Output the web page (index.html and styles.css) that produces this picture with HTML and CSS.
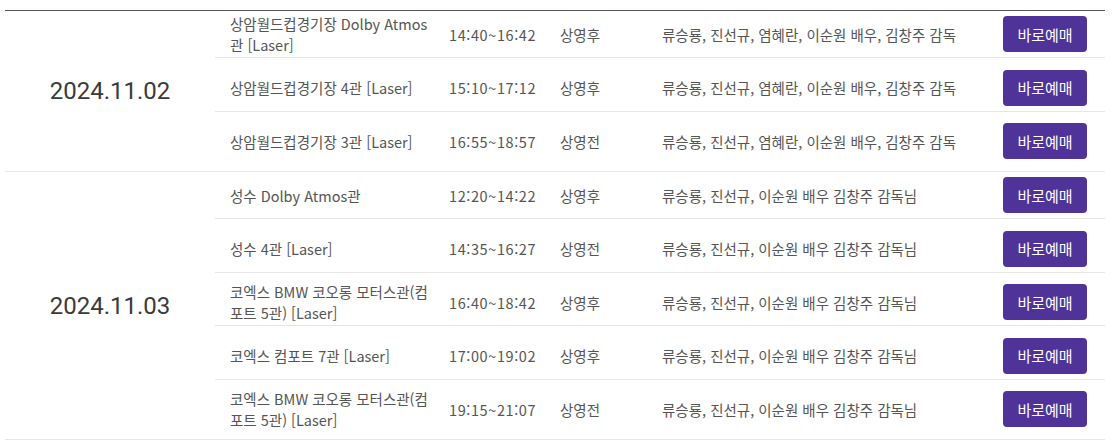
FILE: index.html
```html
<!DOCTYPE html>
<html lang="ko">
<head>
<meta charset="utf-8">
<title>상영 일정</title>
<link rel="stylesheet" href="styles.css">
</head>
<body>
<div class="schedule">
  <div class="group">
    <div class="date">2024.11.02</div>
    <div class="rows">
      <div class="row">
        <div class="venue">상암월드컵경기장 Dolby Atmos관 [Laser]</div>
        <div class="time">14:40~16:42</div>
        <div class="status">상영후</div>
        <div class="cast">류승룡, 진선규, 염혜란, 이순원 배우, 김창주 감독</div>
        <div class="action"><button class="book">바로예매</button></div>
      </div>
      <div class="row">
        <div class="venue">상암월드컵경기장 4관 [Laser]</div>
        <div class="time">15:10~17:12</div>
        <div class="status">상영후</div>
        <div class="cast">류승룡, 진선규, 염혜란, 이순원 배우, 김창주 감독</div>
        <div class="action"><button class="book">바로예매</button></div>
      </div>
      <div class="row">
        <div class="venue">상암월드컵경기장 3관 [Laser]</div>
        <div class="time">16:55~18:57</div>
        <div class="status">상영전</div>
        <div class="cast">류승룡, 진선규, 염혜란, 이순원 배우, 김창주 감독</div>
        <div class="action"><button class="book">바로예매</button></div>
      </div>
    </div>
  </div>
  <div class="group">
    <div class="date">2024.11.03</div>
    <div class="rows">
      <div class="row">
        <div class="venue">성수 Dolby Atmos관</div>
        <div class="time">12:20~14:22</div>
        <div class="status">상영후</div>
        <div class="cast">류승룡, 진선규, 이순원 배우 김창주 감독님</div>
        <div class="action"><button class="book">바로예매</button></div>
      </div>
      <div class="row">
        <div class="venue">성수 4관 [Laser]</div>
        <div class="time">14:35~16:27</div>
        <div class="status">상영전</div>
        <div class="cast">류승룡, 진선규, 이순원 배우 김창주 감독님</div>
        <div class="action"><button class="book">바로예매</button></div>
      </div>
      <div class="row">
        <div class="venue">코엑스 BMW 코오롱 모터스관(컴포트 5관) [Laser]</div>
        <div class="time">16:40~18:42</div>
        <div class="status">상영후</div>
        <div class="cast">류승룡, 진선규, 이순원 배우 김창주 감독님</div>
        <div class="action"><button class="book">바로예매</button></div>
      </div>
      <div class="row">
        <div class="venue">코엑스 컴포트 7관 [Laser]</div>
        <div class="time">17:00~19:02</div>
        <div class="status">상영후</div>
        <div class="cast">류승룡, 진선규, 이순원 배우 김창주 감독님</div>
        <div class="action"><button class="book">바로예매</button></div>
      </div>
      <div class="row">
        <div class="venue">코엑스 BMW 코오롱 모터스관(컴포트 5관) [Laser]</div>
        <div class="time">19:15~21:07</div>
        <div class="status">상영전</div>
        <div class="cast">류승룡, 진선규, 이순원 배우 김창주 감독님</div>
        <div class="action"><button class="book">바로예매</button></div>
      </div>
    </div>
  </div>
</div>
</body>
</html>
```
FILE: styles.css
```css
html, body {
  margin: 0;
  padding: 0;
  background: #fff;
}
body {
  font-family: "Noto Sans CJK KR", "Noto Sans", sans-serif;
  color: #555;
}
.schedule {
  margin: 10px 0 0 5px;
  width: 1100px;
  border-top: 1px solid #555;
}
.group {
  display: flex;
  border-bottom: 1px solid #e6e6e6;
  padding-bottom: 7px;
}
.date {
  width: 210px;
  flex: none;
  display: flex;
  align-items: center;
  justify-content: center;
  font-family: Roboto, "Noto Sans", sans-serif;
  font-size: 24px;
  color: #3a3a3a;
  padding-top: 7px;
}
.rows {
  flex: 1;
  display: flex;
  flex-direction: column;
  gap: 6.5px;
}
.row {
  display: grid;
  grid-template-columns: 219px 111px 102px 1fr 84px;
  align-items: center;
  height: 46px;
  padding: 0 18px 0 15px;
  border-bottom: 1px solid #e6e6e6;
  font-size: 14.5px;
  line-height: 21px;
}
.row:last-child {
  border-bottom: none;
}
.venue {
  padding-right: 16px;
  color: #555;
}
.time, .status, .cast {
  white-space: nowrap;
  color: #555;
}
.time {
  letter-spacing: 0.6px;
}
.action {
  display: flex;
}
.book {
  width: 84px;
  height: 36px;
  border: none;
  border-radius: 4px;
  background: #503398;
  color: #fff;
  font-family: "Noto Sans CJK KR", sans-serif;
  font-size: 15px;
  padding: 0;
  cursor: pointer;
}
```
